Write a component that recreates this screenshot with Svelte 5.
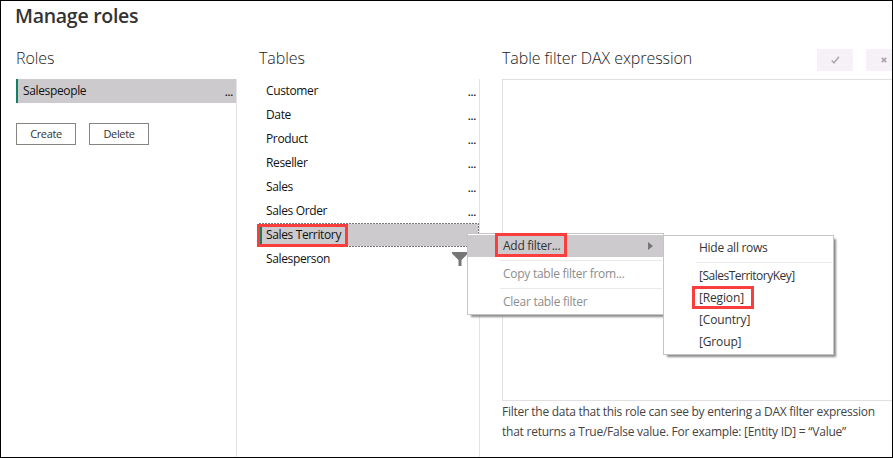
<script>
  const tables = ['Customer', 'Date', 'Product', 'Reseller', 'Sales', 'Sales Order', 'Sales Territory', 'Salesperson'];
  const fields = ['[SalesTerritoryKey]', '[Region]', '[Country]', '[Group]'];
  const selected = 'Sales Territory';
</script>

<div class="dialog">
  <h1><span>Manage roles</span></h1>
  <div class="columns">
    <section class="roles">
      <h2>Roles</h2>
      <div class="body">
        <div class="role"><span class="name">Salespeople</span><span class="dots">...</span></div>
        <div class="buttons">
          <button>Create</button>
          <button>Delete</button>
        </div>
      </div>
    </section>
    <section class="tables">
      <h2>Tables</h2>
      <div class="body">
        {#each tables as name}
          <div class="row" class:selected={name === selected}>
            <span class="name">{name}</span>
            {#if name === selected}
              <i class="mark"></i>
            {:else if name === 'Salesperson'}
              <svg class="funnel" width="16" height="15" viewBox="0 0 16 15"><path d="M0 0h16v1.5L9.5 8v6h-3V8L0 1.5z" fill="#767676" /></svg>
            {:else}
              <span class="dots">...</span>
            {/if}
          </div>
        {/each}
      </div>
    </section>
    <section class="filter">
      <div class="filter-head">
        <h2>Table filter DAX expression</h2>
        <div class="tool"><svg width="9" height="8" viewBox="0 0 9 8"><path d="M.7 4.5 3 6.8 8 .8" fill="none" stroke="#aaa7aa" stroke-width="1.5" /></svg></div>
        <div class="tool"><svg width="6" height="6" viewBox="0 0 6 6"><path d="M.8.8 5.2 5.2M5.2.8.8 5.2" fill="none" stroke="#aaa7aa" stroke-width="1.7" /></svg></div>
      </div>
      <div class="editor"></div>
      <p><span class="first">Filter the data that this role can see by entering a DAX filter expression</span><br />that returns a True/False value. For example: [Entity ID] = “Value”</p>
    </section>
  </div>

  <div class="menu main">
    <div class="item active"><span>Add filter...</span><svg width="5" height="8" viewBox="0 0 5 8"><path d="M0 0l5 4-5 4z" fill="#767676" /></svg></div>
    <hr />
    <div class="item off">Copy table filter from...</div>
    <hr />
    <div class="item off">Clear table filter</div>
  </div>
  <div class="menu sub">
    <div class="item">Hide all rows</div>
    <hr />
    {#each fields as field, i}
      <div class="item" class:long={i === 0} class:short={i > 0}>{field}</div>
    {/each}
  </div>

  <i class="callout table-callout"></i>
  <i class="callout add-callout"></i>
  <i class="callout region-callout"></i>
</div>

<style>
  * { box-sizing: border-box; }
  .dialog {
    position: relative; width: 893px; height: 458px; overflow: hidden;
    border: 1px solid #000; background: #fff; color: #111;
    font: 12px/24px "Open Sans", "Noto Sans", sans-serif; white-space: nowrap;
    display: flex; flex-direction: column;
  }
  h1 { margin: 0; padding: 1px 0 0 14px; height: 42px; font-size: 19.5px; line-height: 27px; font-weight: 600; color: #333; flex: none; }
  h1 span { letter-spacing: -0.28px; }
  h2 { margin: 0; height: 36px; font-size: 16px; line-height: 30px; font-weight: 300; letter-spacing: -0.06px; color: #222; flex: none; }
  .columns { display: flex; flex: 1; padding-left: 15px; }
  section { display: flex; flex-direction: column; flex: none; }
  .roles { width: 221px; }
  .tables { width: 221px; margin-left: 22px; }
  .filter { width: 390px; margin-left: 22px; }
  .body { flex: 1; border-right: 1px solid #e3e3e3; }
  .role { height: 24px; display: flex; justify-content: space-between; background: #cdcacd; border-left: 2px solid #118064; padding: 0 3px 0 5px; }
  .dots { font-size: 11px; font-weight: 600; letter-spacing: -0.3px; line-height: 25px; }
  .buttons { display: flex; gap: 13px; margin-top: 20px; }
  button { width: 60px; height: 22px; border: 1px solid #85857f; background: #fff; padding: 0; font: 11px/18px "Open Sans", "Noto Sans", sans-serif; letter-spacing: -0.35px; color: #333; }
  .row { position: relative; height: 24px; display: flex; justify-content: space-between; padding: 0 3px 0 7px; }
  .selected {
    background:
      repeating-linear-gradient(90deg, #777 0 2px, #fff 2px 3px) top / 100% 1px no-repeat,
      repeating-linear-gradient(90deg, #777 0 2px, #fff 2px 3px) bottom / 100% 1px no-repeat,
      repeating-linear-gradient(#777 0 2px, #fff 2px 3px) right / 1px 100% no-repeat,
      #cdcacd;
  }
  .mark { position: absolute; left: 1px; top: 3px; width: 2px; height: 18px; background: #118064; }
  .funnel { margin: 5px 8px 0 0; }
  .name { letter-spacing: -0.36px; }
  .filter-head { display: flex; height: 36px; }
  .filter-head h2 { width: 315px; }
  .tool { width: 36px; height: 22px; margin: 6px 13px 0 0; background: #f6f1f6; display: flex; align-items: center; justify-content: center; flex: none; }
  .editor { height: 322px; border: 1px solid #e1dfe1; border-right: 0; }
  p { margin: 1px 0 0; line-height: 20px; letter-spacing: -0.24px; color: #444; }
  .first { letter-spacing: -0.275px; }
  .menu { position: absolute; background: #fff; border: 1px solid #c6c6c6; line-height: 22px; letter-spacing: -0.27px; color: #333; box-shadow: 3px 3px 2px -1px #8a8a8a; }
  .main { left: 466px; top: 232px; width: 197px; height: 82px; padding-top: 1px; }
  .sub { left: 662px; top: 234px; width: 171px; height: 120px; padding-top: 1px; }
  .item { height: 22px; padding-left: 35px; }
  .active { display: flex; justify-content: space-between; align-items: center; background: #cdcacd; padding-right: 10px; }
  .long { letter-spacing: -0.5px; }
  .short { letter-spacing: -0.15px; }
  .off { color: #8d8d8d; }
  hr { height: 1px; margin: 3px 1px 2px 32px; border: 0; background: #eae8ea; }
  .callout { position: absolute; border: 3px solid #fa3e3e; }
  .table-callout { left: 256px; top: 223px; width: 91px; height: 23px; }
  .add-callout { left: 494px; top: 232px; width: 72px; height: 24px; }
  .region-callout { left: 691px; top: 285px; width: 62px; height: 23px; }
</style>
